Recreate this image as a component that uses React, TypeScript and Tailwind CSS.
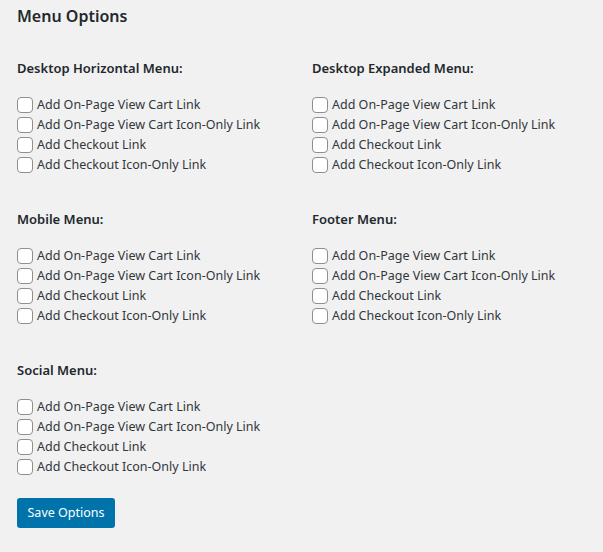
import React from 'react';

const options = [
  'Add On-Page View Cart Link',
  'Add On-Page View Cart Icon-Only Link',
  'Add Checkout Link',
  'Add Checkout Icon-Only Link',
];

function MenuSection({ title }: { title: string }) {
  return (
    <div className="w-[295px]">
      <h3 className="text-[13px] leading-5 font-semibold text-[#23282d]">{title}</h3>
      <div className="mt-[17px] flex flex-col">
        {options.map((o) => (
          <label key={o} className="flex items-center h-5 text-[12.5px] text-[#32373c] cursor-pointer">
            <span className="w-4 h-4 border border-[#8c8f94] rounded-[4px] bg-white shrink-0 mr-1"></span>
            <span>{o}</span>
          </label>
        ))}
      </div>
    </div>
  );
}

export default function App() {
  return (
    <div
      className="w-[603px] h-[552px] bg-[#f1f1f1] pl-[17px] pt-1 overflow-hidden"
      style={{ fontFamily: '"Noto Sans", "Open Sans", sans-serif' }}
    >
      <h2 className="text-[16px] leading-6 font-semibold text-[#23282d]">Menu Options</h2>
      <div className="mt-[30px] grid grid-cols-[295px_295px] gap-y-[34px]">
        <MenuSection title="Desktop Horizontal Menu:" />
        <MenuSection title="Desktop Expanded Menu:" />
        <MenuSection title="Mobile Menu:" />
        <MenuSection title="Footer Menu:" />
        <MenuSection title="Social Menu:" />
      </div>
      <button className="mt-[21px] w-[98px] h-[30px] bg-[#0073aa] text-white text-[12.5px] rounded-[3px]">
        Save Options
      </button>
    </div>
  );
}
